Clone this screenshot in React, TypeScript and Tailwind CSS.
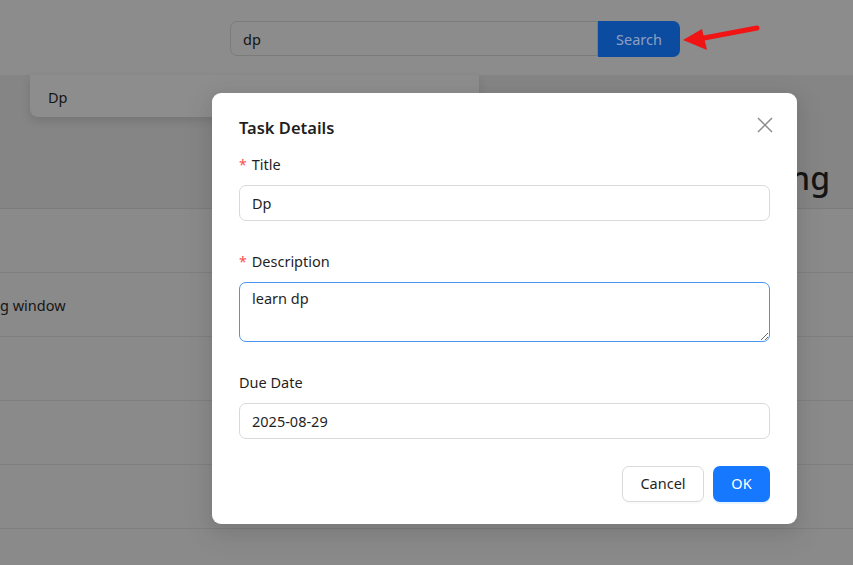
import React from "react";

const rows = ["", "g window", "", "", ""];

const Label = ({ text, required }: { text: string; required?: boolean }) => (
  <div className="h-[25px] mb-[9px] flex items-center pt-[2px] text-[14.5px] text-[#1f1f1f]">
    {required && <span className="text-[#ff4d4f] mr-[5px] text-[14px]">*</span>}
    {text}
  </div>
);

const App = () => {
  return (
    <div className="relative w-[853px] h-[565px] overflow-hidden bg-[#8a8a8a] font-['Noto_Sans',sans-serif]">
      {/* header with search */}
      <div className="h-[75px] bg-[#8c8c8c] pl-[230px] pt-[21px] flex">
        <div className="w-[368px] h-[35px] border border-[#7b7b7b] rounded-l-[7px] flex items-center pl-[12px] pt-[2px] text-[14.5px] text-[#141414]">
          dp
        </div>
        <div className="w-[82px] h-[36px] bg-[#0c4ca0] rounded-r-[7px] flex items-center justify-center pt-[2px] text-[14.5px] text-[#8ca0c2]">
          Search
        </div>
      </div>

      {/* table header / title band */}
      <div className="h-[134px] bg-[#858586] border-b border-[#7b7b7b] flex items-end justify-end pr-[23px] pb-[6px]">
        <span className="text-[32px] font-medium text-[#151515] leading-none pb-[8px]">Pending</span>
      </div>

      {rows.map((r, i) => (
        <div key={i} className="h-[64px] border-b border-[#7f7f7f] flex items-center pt-[2px] text-[14.5px] text-[#161616]">
          {r}
        </div>
      ))}

      {/* autocomplete dropdown */}
      <div className="absolute left-[30px] top-[75px] w-[449px] h-[42px] bg-[#8d8d8d] rounded-b-[8px] shadow-[0_4px_10px_rgba(0,0,0,0.12)] flex items-center pl-[18px] pt-[3px] text-[14.5px] text-[#151515]">
        Dp
      </div>

      {/* red annotation arrow */}
      <svg className="absolute left-[678px] top-[20px]" width="90" height="36" viewBox="0 0 90 36">
        <line x1="79" y1="8" x2="26" y2="18" stroke="#f01414" strokeWidth="5" strokeLinecap="round" />
        <polygon points="5,20 24,9 29,30" fill="#f01414" />
      </svg>

      {/* modal */}
      <div className="absolute left-[212px] top-[93px] w-[585px] bg-white rounded-[9px] shadow-[0_6px_16px_rgba(0,0,0,0.08),0_9px_28px_8px_rgba(0,0,0,0.05)] px-[27px] pt-[22px] pb-[22px]">
        <div className="relative h-[27px] mb-[9px] flex items-center">
          <span className="text-[16.5px] font-semibold text-[#1f1f1f]">Task Details</span>
          <svg className="absolute right-[-3px] top-[2px]" width="16" height="16" viewBox="0 0 16 16">
            <path d="M1 1 L15 15 M15 1 L1 15" stroke="#8c8c8c" strokeWidth="1.5" />
          </svg>
        </div>

        <div className="mb-[27px]">
          <Label text="Title" required />
          <input
            readOnly
            value="Dp"
            className="w-full h-[36px] border border-[#d9d9d9] rounded-[7px] px-[12px] text-[14.5px] text-[#1f1f1f] outline-none"
          />
        </div>

        <div className="mb-[27px]">
          <Label text="Description" required />
          <textarea
            readOnly
            value="learn dp"
            className="block w-full h-[60px] border border-[#4a93ef] rounded-[7px] px-[12px] py-[5px] text-[14.5px] text-[#1f1f1f] outline-none resize-y"
          />
        </div>

        <div className="mb-[27px]">
          <Label text="Due Date" />
          <input
            readOnly
            value="2025-08-29"
            className="w-full h-[36px] border border-[#d9d9d9] rounded-[7px] px-[12px] text-[14.5px] text-[#1f1f1f] outline-none"
          />
        </div>

        <div className="flex justify-end gap-[9px]">
          <button className="w-[82px] h-[36px] border border-[#d9d9d9] rounded-[7px] bg-white text-[14.5px] text-[#1f1f1f] shadow-[0_2px_0_rgba(0,0,0,0.02)]">
            Cancel
          </button>
          <button className="w-[57px] h-[36px] rounded-[7px] bg-[#1677ff] text-[14.5px] text-white shadow-[0_2px_0_rgba(5,145,255,0.1)]">
            OK
          </button>
        </div>
      </div>
    </div>
  );
};

export default App;
